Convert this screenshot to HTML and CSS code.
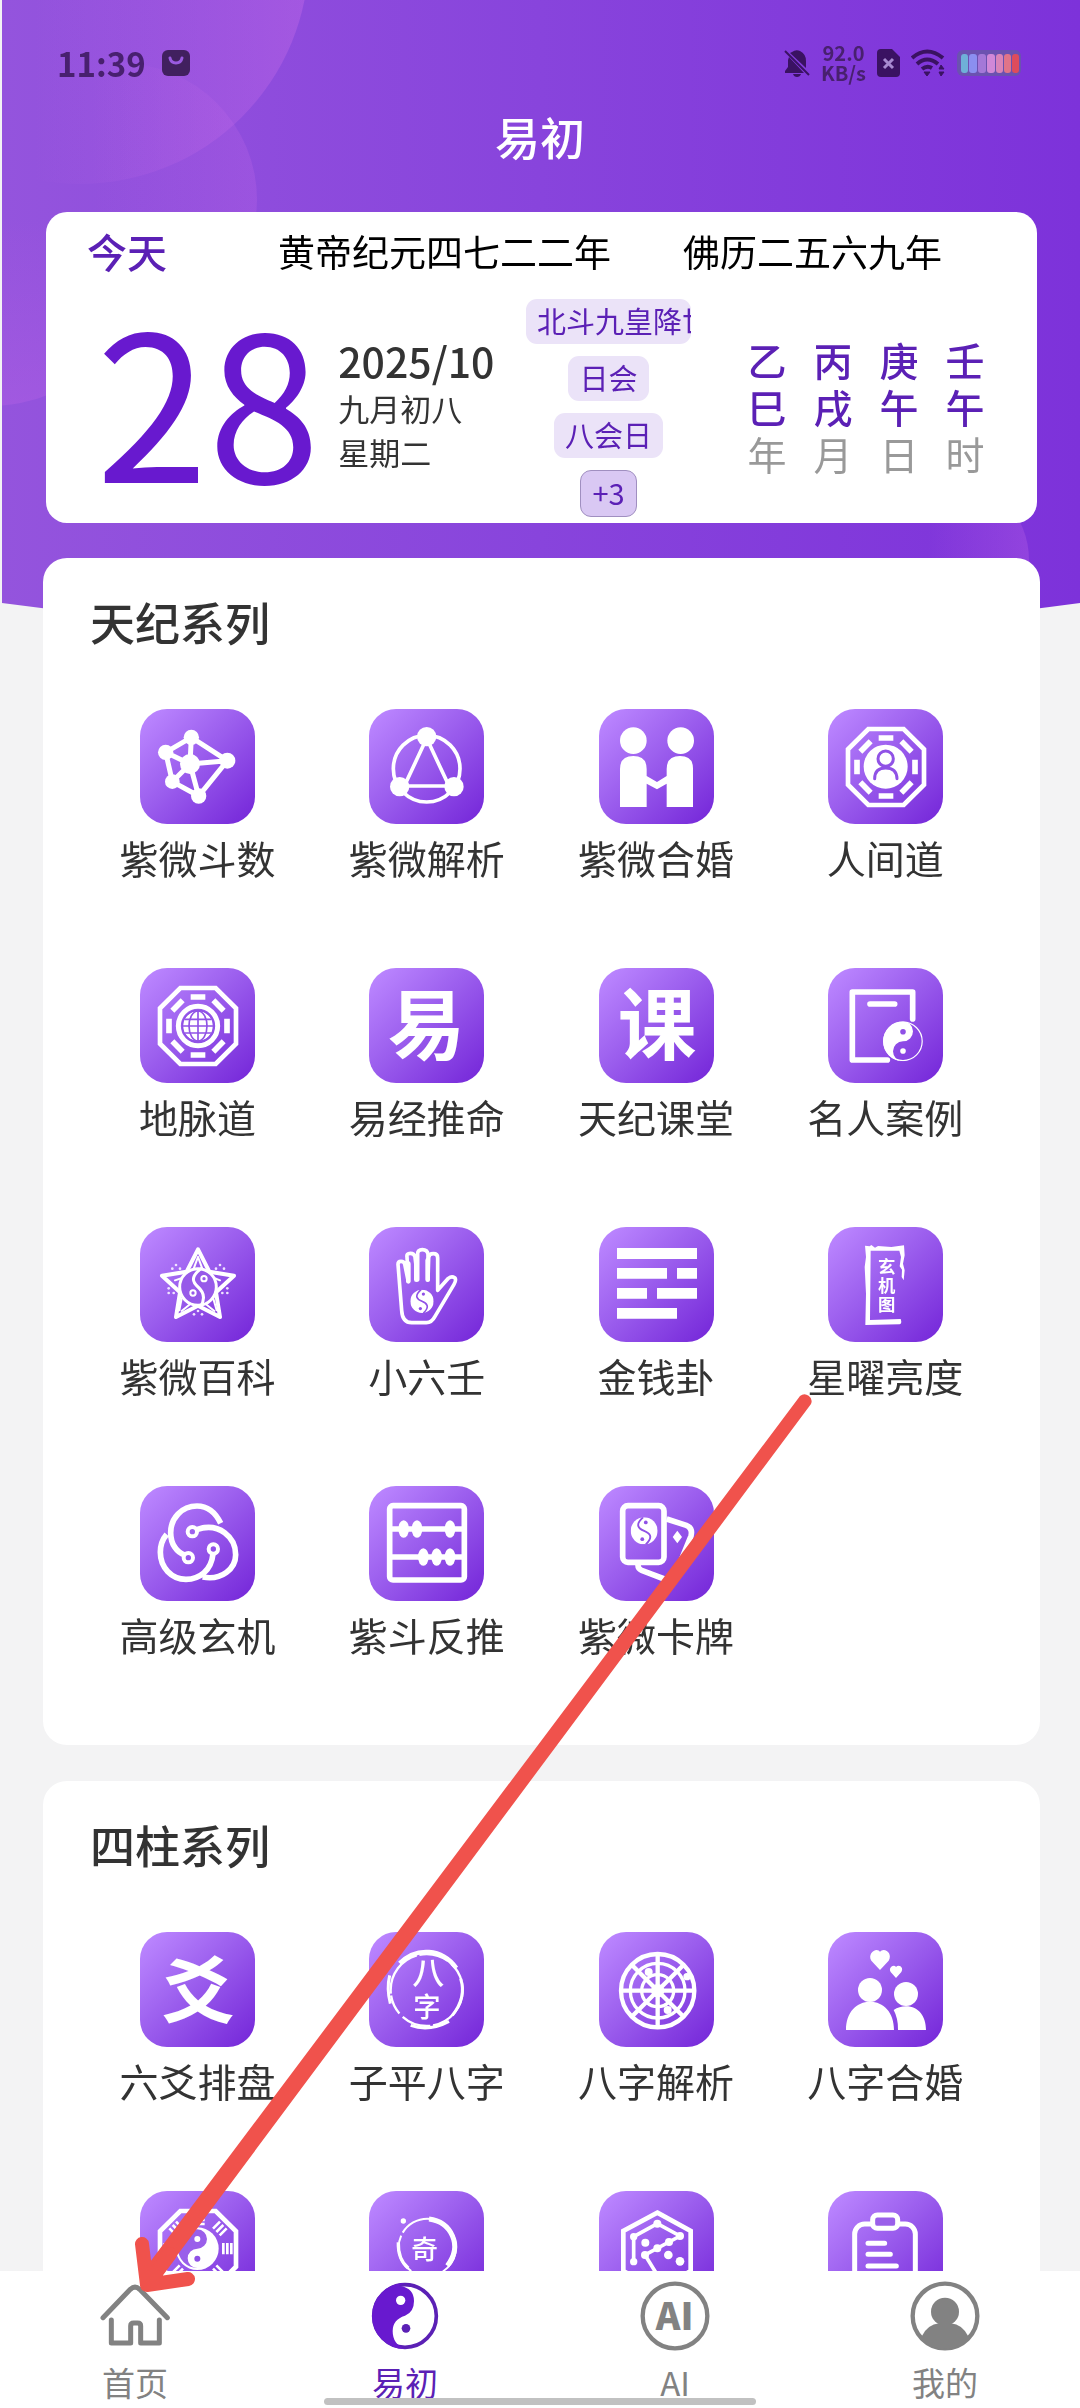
FILE: index.html
```html
<!DOCTYPE html>
<html lang="zh-CN">
<head>
<meta charset="utf-8">
<meta name="viewport" content="width=device-width, initial-scale=1">
<title>易初</title>
<link rel="stylesheet" href="styles.css">
</head>
<body>
<svg class="defs" aria-hidden="true">
  <defs>
    <symbol id="taiji" viewBox="-50 -50 100 100">
      <circle r="48" fill="none" stroke="currentColor" stroke-width="3"/>
      <path d="M0-50A50 50 0 0 0 0 50A25 25 0 0 1 0 0A25 25 0 0 0 0-50Z" fill="currentColor"/>
      <circle cy="-24" r="7" fill="#8f50e6"/>
      <circle cy="24" r="7" fill="currentColor"/>
    </symbol>
    <symbol id="taiji-full" viewBox="-50 -50 100 100">
      <circle r="50" fill="currentColor"/>
      <path d="M-4-50C-36-22-20-8 0 0S36 22 6 50" fill="none" stroke="#8f50e6" stroke-width="7"/>
      <circle cx="6" cy="-31" r="7" fill="#8f50e6"/>
      <circle cx="-7" cy="31" r="7" fill="#8f50e6"/>
    </symbol>
    <symbol id="octagon" viewBox="0 0 345 345">
      <path d="M121 60H227L288 121V227L227 288H121L60 227V121Z" fill="none" stroke="#fff" stroke-width="14"/>
      <g stroke="#fff" stroke-width="17">
        <path d="M152 87H196M152 261H196M87 152V196M261 152V196"/>
        <path d="M97 128L128 97M220 97L251 128M97 220L128 251M220 251L251 220"/>
      </g>
    </symbol>
  </defs>
</svg>

<div class="screen">
  <main class="content">
    <svg class="backdrop" viewBox="0 0 1080 640" preserveAspectRatio="none" aria-hidden="true">
      <defs>
        <linearGradient id="sky"><stop offset="0" stop-color="#9454dd"/><stop offset=".5" stop-color="#8844dc"/><stop offset="1" stop-color="#7d32da"/></linearGradient>
        <linearGradient id="glow"><stop offset=".4" stop-color="#c56be8" stop-opacity="0"/><stop offset="1" stop-color="#c56be8" stop-opacity=".4"/></linearGradient>
        <linearGradient id="glow-down" x2="0" y2="1"><stop offset=".4" stop-color="#b963e6" stop-opacity="0"/><stop offset="1" stop-color="#b963e6" stop-opacity=".35"/></linearGradient>
        <clipPath id="curve"><path d="M2 0H1080V603Q540 676 2 603Z"/></clipPath>
      </defs>
      <g clip-path="url(#curve)">
        <path d="M0 0H1080V640H0Z" fill="url(#sky)"/>
        <circle cx="120" cy="200" r="137" fill="url(#glow)" opacity=".6"/>
        <circle cx="80" cy="-45" r="229" fill="url(#glow)"/>
        <circle cx="-10" cy="250" r="156" fill="url(#glow-down)"/>
        <circle cx="945" cy="560" r="84" fill="url(#glow)" opacity=".7"/>
      </g>
    </svg>

    <header class="statusbar">
      <div class="status-group">
        <span class="clock">11:39</span>
        <svg width="28" height="26" viewBox="0 0 28 26"><rect width="28" height="26" rx="6" fill="#41205f"/><path d="M8 8Q9 13 14 13T20 8" fill="none" stroke="#9a5ae0" stroke-width="3" stroke-linecap="round"/></svg>
      </div>
      <div class="status-group status-right">
        <svg width="26" height="28" viewBox="0 0 26 28" fill="#3a1262"><path d="M5 8L20 24H1V22L4 18V11ZM8 3Q12 0 16 2Q22 5 22 12V19L6 4ZM9 25H17Q16 28 13 28T9 25Z"/><path d="M1 2L25 26" stroke="#3a1262" stroke-width="2"/></svg>
        <span class="speed">92.0<br>KB/s</span>
        <svg width="23" height="28" viewBox="0 0 23 28"><path d="M4 0H15L23 8V24Q23 28 19 28H4Q0 28 0 24V4Q0 0 4 0Z" fill="#3a1262"/><path d="M7 10L16 19M16 10L7 19" stroke="#a78ad0" stroke-width="3"/></svg>
        <svg width="34" height="28" viewBox="0 0 34 28" fill="none" stroke="#3a1262" stroke-width="4"><path d="M1 9Q16-4 32 9M6 15Q16 6 27 15M11 20Q16 16 21 19"/><path d="M13 23L16 27L19 23ZM28 20L30 16L33 20ZM28 23L30 27L33 23Z" fill="#3a1262" stroke-width="1"/></svg>
        <svg width="66" height="28" viewBox="0 0 66 28"><rect x="1" y="1" width="64" height="26" rx="6" fill="#6b52b0"/><g><rect x="5" y="5" width="7" height="19" rx="3" fill="#6fb0d8"/><rect x="13" y="5" width="8" height="19" rx="3" fill="#8b8ff0"/><rect x="22" y="5" width="8" height="19" rx="3" fill="#a478d8"/><rect x="31" y="5" width="8" height="19" rx="3" fill="#d088d8"/><rect x="40" y="5" width="7" height="19" rx="3" fill="#d884b8"/><rect x="48" y="5" width="7" height="19" rx="3" fill="#e07488"/><rect x="56" y="5" width="7" height="19" rx="3" fill="#de4c5c"/></g></svg>
      </div>
    </header>

    <h1 class="page-title">易初</h1>

    <section class="today">
      <div class="eras">
        <strong class="today-label">今天</strong>
        <span>黄帝纪元四七二二年</span>
        <span>佛历二五六九年</span>
      </div>
      <div class="today-body">
        <div class="day">28</div>
        <div class="date">
          <span class="month">2025/10</span>
          <span>九月初八</span>
          <span>星期二</span>
        </div>
        <div class="tags">
          <span class="tag">北斗九皇降世</span>
          <span class="tag">日会</span>
          <span class="tag">八会日</span>
          <button class="tag more" type="button">+3</button>
        </div>
        <table class="pillars">
          <tbody>
            <tr><td>乙</td><td>丙</td><td>庚</td><td>壬</td></tr>
            <tr><td>巳</td><td>戌</td><td>午</td><td>午</td></tr>
          </tbody>
          <tfoot>
            <tr><th scope="col">年</th><th scope="col">月</th><th scope="col">日</th><th scope="col">时</th></tr>
          </tfoot>
        </table>
      </div>
    </section>

    <section class="panel">
      <h2>天纪系列</h2>
      <div class="grid">
        <a class="item" href="#"><svg class="icon" viewBox="0 0 345 345"><g stroke="#fff" stroke-width="15" fill="none"><path d="M77 130L154 85L262 155L176 261L97 218ZM150 165L77 130M150 165L154 85M150 165L262 155M150 165L176 261M150 165L97 218"/></g><g fill="#fff"><circle cx="154" cy="85" r="23"/><circle cx="77" cy="130" r="23"/><circle cx="262" cy="155" r="24"/><circle cx="176" cy="261" r="23"/><circle cx="97" cy="218" r="22"/><circle cx="150" cy="165" r="30"/></g></svg><span>紫微斗数</span></a>
        <a class="item" href="#"><svg class="icon" viewBox="0 0 345 345"><g stroke="#fff" stroke-width="11" fill="none"><circle cx="173" cy="179" r="100"/><path d="M173 88L106 231H240Z"/></g><g fill="#fff"><circle cx="173" cy="83" r="29"/><circle cx="92" cy="233" r="29"/><circle cx="255" cy="233" r="29"/></g></svg><span>紫微解析</span></a>
        <a class="item" href="#"><svg class="icon" viewBox="0 0 345 345" fill="#fff"><circle cx="103" cy="95" r="40"/><circle cx="245" cy="95" r="40"/><path d="M63 294V180Q63 141 103 141T143 180V201L174 219L203 201V180Q203 141 243 141T282 180V294H203V224L174 241L143 224V294Z"/></svg><span>紫微合婚</span></a>
        <a class="item" href="#"><svg class="icon" viewBox="0 0 345 345"><use href="#octagon"/><circle cx="173" cy="173" r="66" fill="#fff"/><g stroke="#9052e6" stroke-width="9" fill="none" stroke-linecap="round"><circle cx="173" cy="149" r="23"/><path d="M140 209Q140 177 173 177T207 209"/></g></svg><span>人间道</span></a>

        <a class="item" href="#"><svg class="icon" viewBox="0 0 345 345"><use href="#octagon"/><circle cx="174" cy="174" r="59" fill="none" stroke="#fff" stroke-width="15"/><circle cx="174" cy="174" r="45" fill="#fff"/><g stroke="#9052e6" stroke-width="5" fill="none"><circle cx="174" cy="174" r="47"/><ellipse cx="174" cy="174" rx="27" ry="45"/><path d="M174 129V219M129 174H219M134 154H214M134 195H214"/></g></svg><span>地脉道</span></a>
        <a class="item" href="#"><svg class="icon glyph" viewBox="0 0 345 345"><text x="172" y="257" font-size="232">易</text></svg><span>易经推命</span></a>
        <a class="item" href="#"><svg class="icon glyph" viewBox="0 0 345 345"><text x="174" y="259" font-size="236">课</text></svg><span>天纪课堂</span></a>
        <a class="item" href="#"><svg class="icon" viewBox="0 0 345 345" color="#fff"><g stroke="#fff" stroke-width="17" fill="none" stroke-linecap="round" stroke-linejoin="round"><path d="M254 153V72H73V276H178M126 108H200"/></g><use href="#taiji" x="165" y="160" width="120" height="120"/></svg><span>名人案例</span></a>

        <a class="item" href="#"><svg class="icon" viewBox="0 0 345 345"><g stroke="#fff" fill="none" stroke-linejoin="round" stroke-linecap="round"><path d="M174 67L208 134L282 146L228 196L240 270L174 236L108 270L120 196L66 146L140 134Z" stroke-width="12"/><path d="M174 90L160 128M174 90L188 128M240 160L215 150M105 160L135 150M118 250L125 215M125 252L150 232M230 250L220 215M223 252L198 232" stroke-width="6"/><circle cx="174" cy="180" r="55" fill="#975ae9" stroke-width="9"/><path d="M184 124C150 150 158 166 174 180S198 212 182 238" stroke-width="9"/><circle cx="192" cy="155" r="8" stroke-width="6"/><circle cx="159" cy="198" r="8" stroke-width="6"/></g><g fill="#f0e4ff"><circle cx="97" cy="125" r="4"/><circle cx="108" cy="114" r="4"/><circle cx="120" cy="125" r="4"/><circle cx="228" cy="125" r="4"/><circle cx="240" cy="114" r="4"/><circle cx="252" cy="125" r="4"/><circle cx="86" cy="184" r="4"/><circle cx="86" cy="198" r="4"/><circle cx="101" cy="198" r="4"/><circle cx="262" cy="184" r="4"/><circle cx="262" cy="198" r="4"/><circle cx="247" cy="198" r="4"/><circle cx="162" cy="262" r="4"/><circle cx="174" cy="252" r="4"/><circle cx="186" cy="262" r="4"/></g></svg><span>紫微百科</span></a>
        <a class="item" href="#"><svg class="icon" viewBox="0 0 345 345" color="#fff"><path d="M118 165L107 111Q105 103 96 103T87 112L98 250Q100 287 128 287H172Q188 287 198 268L255 172Q263 158 257 152Q248 146 238 154L206 190V92Q206 80 193 80T179 92L177 158V82Q175 68 160 68T146 82V158L138 90Q136 79 124 79T114 90L118 165" fill="none" stroke="#fff" stroke-width="11" stroke-linejoin="round"/><path d="M118 110V163M142 100V158M176 100V158" stroke="#fff" stroke-width="14" stroke-linecap="round"/><use href="#taiji-full" x="124" y="188" width="70" height="70"/></svg><span>小六壬</span></a>
        <a class="item" href="#"><svg class="icon" viewBox="0 0 345 345" fill="#fff"><path d="M54 63H294V96H54ZM54 123H204V155H54ZM234 123H294V155H234ZM54 183H144V215H54ZM174 183H294V215H174ZM54 243H234V275H54Z"/></svg><span>金钱卦</span></a>
        <a class="item" href="#"><svg class="icon glyph" viewBox="0 0 345 345"><path d="M111 56L125 58L130 54L141 62L150 57L190 60L228 55L230 85L225 110L230 130L227 160L221 150L222 128L215 118L219 90L214 71H128L126 279L218 276Q223 290 215 292L112 294L114 200L110 120L114 90Z" fill="#fff"/><text x="176" y="138" font-size="52">玄</text><text x="176" y="195" font-size="52">机</text><text x="176" y="252" font-size="52">图</text></svg><span>星曜亮度</span></a>

        <a class="item" href="#"><svg class="icon" viewBox="0 0 345 345"><g stroke="#fff" fill="none" stroke-width="17"><path d="M242 112C222 70 196 60 171 60C125 60 92 97 92 140C92 176 112 200 134 207M170 131C238 107 287 155 287 206C287 248 245 284 188 273M219 203C214 254 178 280 138 280C94 280 61 244 61 199C61 178 68 159 80 145"/><circle cx="157" cy="137" r="14" stroke-width="12"/><circle cx="145" cy="215" r="14" stroke-width="12"/><circle cx="220" cy="189" r="14" stroke-width="12"/></g></svg><span>高级玄机</span></a>
        <a class="item" href="#"><svg class="icon" viewBox="0 0 345 345"><g stroke="#fff" fill="none" stroke-width="17"><rect x="62" y="59" width="224" height="223" rx="10"/><path d="M62 129H286M62 213H286"/></g><g fill="#fff"><ellipse cx="104" cy="129" rx="16" ry="26"/><ellipse cx="144" cy="129" rx="16" ry="26"/><ellipse cx="243" cy="129" rx="16" ry="26"/><ellipse cx="163" cy="213" rx="16" ry="26"/><ellipse cx="203" cy="213" rx="16" ry="26"/><ellipse cx="243" cy="213" rx="16" ry="26"/></g></svg><span>紫斗反推</span></a>
        <a class="item" href="#"><svg class="icon" viewBox="0 0 345 345" color="#fff"><g stroke="#fff" fill="none" stroke-width="17"><rect x="71" y="59" width="124" height="170" rx="16"/><path d="M203 99L262 118Q282 126 276 150L228 268Q218 288 196 279L128 253Q116 248 117 235"/></g><path d="M235 134L249 153L235 172L221 153Z" fill="#fff"/><use href="#taiji-full" x="95" y="94" width="81" height="81"/></svg><span>紫微卡牌</span></a>
      </div>
    </section>

    <section class="panel">
      <h2>四柱系列</h2>
      <div class="grid">
        <a class="item" href="#"><svg class="icon glyph" viewBox="0 0 345 345"><text x="174" y="258" font-size="220">爻</text></svg><span>六爻排盘</span></a>
        <a class="item" href="#"><svg class="icon glyph" viewBox="0 0 345 345"><g fill="none" stroke="#fff"><circle cx="173" cy="174" r="108" stroke-width="7" stroke-dasharray="150 8 90 14 60 6"/><path d="M92 94Q130 56 180 60T262 108" stroke-width="13"/><path d="M275 140Q293 195 250 250M125 280Q180 300 240 268M62 130Q52 170 64 215" stroke-width="9"/></g><text class="thin" x="178" y="155" font-size="96">八</text><text class="thin" x="174" y="256" font-size="82">字</text></svg><span>子平八字</span></a>
        <a class="item" href="#"><svg class="icon" viewBox="0 0 345 345"><g fill="none" stroke="#fff" stroke-width="13"><circle cx="176" cy="176" r="110"/><circle cx="176" cy="176" r="82" stroke-width="10"/><circle cx="176" cy="176" r="48" stroke-width="10"/><path d="M176 66V286M66 176H286M98 98L254 254M254 98L98 254"/></g><g fill="#fff"><circle cx="176" cy="176" r="20"/><circle cx="149" cy="120" r="12"/><circle cx="264" cy="134" r="11"/><circle cx="206" cy="234" r="12"/></g></svg><span>八字解析</span></a>
        <a class="item" href="#"><svg class="icon" viewBox="0 0 345 345" fill="#fff"><circle cx="126" cy="174" r="36"/><circle cx="234" cy="186" r="36"/><path d="M54 294C54 240 86 209 126 209S198 240 198 294ZM197 234Q214 223 234 223C272 223 294 254 294 294H210Q211 260 197 234ZM156 114L130 86C120 70 134 54 146 54Q153 54 156 59Q160 54 167 54C180 54 192 70 182 86ZM204 138L188 120C182 110 190 101 197 101Q202 101 204 105Q207 101 212 101C220 101 226 110 220 120Z"/></svg><span>八字合婚</span></a>

        <a class="item" href="#"><svg class="icon" viewBox="0 0 345 345"><path d="M121 60H227L288 121V227L227 288H121L60 227V121Z" fill="none" stroke="#fff" stroke-width="14"/><g stroke="#fff" stroke-width="8"><path d="M154 75H194M154 87H194M154 99H194M250 156V190M262 156V190M274 156V190M74 156V190M86 156V190M98 156V190"/><path d="M219 113L240 92M229 123L250 102M239 133L260 112M129 113L108 92M119 123L98 102M109 133L88 112M219 233L240 254M229 223L250 244M129 233L108 254M119 223L98 244"/></g><circle cx="172" cy="173" r="64" fill="#fff"/><path d="M172 115A58 58 0 0 0 172 231A29 29 0 0 1 172 173A29 29 0 0 0 172 115Z" fill="#9a5fea"/><circle cx="172" cy="144" r="9" fill="#fff"/><circle cx="172" cy="203" r="9" fill="#8f50e6"/></svg></a>
        <a class="item" href="#"><svg class="icon glyph" viewBox="0 0 345 345"><g fill="none" stroke="#fff"><circle cx="175" cy="169" r="86" stroke-width="6" stroke-dasharray="180 6 120 10"/><path d="M180 84Q230 90 250 134T235 224" stroke-width="15"/><path d="M88 154Q86 204 118 232" stroke-width="10"/></g><circle cx="103" cy="90" r="8" fill="#fff"/><text class="thin" x="167" y="204" font-size="80">奇</text></svg></a>
        <a class="item" href="#"><svg class="icon" viewBox="0 0 345 345"><g fill="none" stroke="#fff" stroke-width="14"><path d="M175 65L275 120V240L175 298L73 240V120Z"/><path d="M104 212V137L175 98L243 135L138 192L180 260" stroke-width="11"/></g><g fill="#fff"><circle cx="104" cy="212" r="11"/><circle cx="104" cy="137" r="11"/><circle cx="175" cy="98" r="12"/><circle cx="243" cy="135" r="12"/><circle cx="210" cy="153" r="12"/><circle cx="175" cy="172" r="12"/><circle cx="138" cy="192" r="12"/><circle cx="139" cy="155" r="12"/><circle cx="208" cy="192" r="13"/><circle cx="243" cy="211" r="13"/></g></svg></a>
        <a class="item" href="#"><svg class="icon" viewBox="0 0 345 345"><g fill="none" stroke="#fff" stroke-width="15" stroke-linecap="round"><rect x="80" y="99" width="182" height="210" rx="30"/><rect x="134" y="72" width="75" height="40" rx="14" fill="#9a5fea"/><path d="M120 157H170M120 190H187M120 225H205"/></g></svg></a>
      </div>
    </section>
  </main>

  <nav class="tabbar">
    <a href="#"><svg viewBox="0 0 210 210" fill="none" stroke="#828282" stroke-width="15" stroke-linecap="round" stroke-linejoin="round"><path d="M9 110L91 25Q105 12 119 25L202 110M34 117V186H92V135Q92 126 101 126H113Q122 126 122 135V186H178V117"/></svg><span>首页</span></a>
    <a href="#" class="active" aria-current="page"><svg viewBox="0 0 210 210"><circle cx="105" cy="105" r="94" fill="#fff" stroke="#5b20b5" stroke-width="11"/><path d="M105 6A99 99 0 0 0 105 204Q68 190 68 150Q68 116 105 104Q132 94 132 60Q132 20 86 14Z" fill="#6819cf"/><circle cx="92" cy="58" r="14" fill="#fff"/><circle cx="108" cy="142" r="13" fill="#5b20b5"/></svg><span>易初</span></a>
    <a href="#"><svg viewBox="0 0 210 210"><circle cx="105" cy="105" r="97" fill="none" stroke="#828282" stroke-width="13"/><text class="ai-mark" x="104" y="147" font-size="112">AI</text></svg><span>AI</span></a>
    <a href="#"><svg viewBox="0 0 210 210" fill="#828282"><circle cx="105" cy="105" r="97" fill="none" stroke="#828282" stroke-width="13"/><circle cx="105" cy="92" r="42"/><path d="M34 168Q52 130 88 127H122Q158 130 176 168Q148 204 105 204T34 168Z"/></svg><span>我的</span></a>
  </nav>
  <div class="gesture-pill"></div>

  <svg class="arrow" viewBox="0 0 1080 2408" preserveAspectRatio="none" aria-hidden="true">
    <path d="M800 1396A7 7 0 0 1 811 1404L161 2277L147 2266Z" fill="#f0524c"/>
    <path d="M142 2244L147 2285L188 2279M147 2285L170 2254" fill="none" stroke="#f0524c" stroke-width="14" stroke-linecap="round" stroke-linejoin="round"/>
  </svg>
</div>
</body>
</html>
```
FILE: styles.css
```css
* {
  box-sizing: border-box;
}

body {
  margin: 0;
  background: #f3f3f4;
  color: #333;
  font-family: "Noto Sans CJK SC", sans-serif;
}

a {
  color: inherit;
  text-decoration: none;
}

.defs {
  position: absolute;
  width: 0;
  height: 0;
}

.screen {
  position: relative;
  display: flex;
  flex-direction: column;
  height: 100vh;
}

.content {
  position: relative;
  flex: 1;
  min-height: 0;
  overflow: hidden auto;
  scrollbar-width: none;
}

.backdrop {
  position: absolute;
  top: 0;
  left: 0;
  z-index: -1;
  width: 100%;
  height: 640px;
}

.statusbar {
  display: flex;
  justify-content: space-between;
  align-items: center;
  height: 94px;
  padding: 32px 58px 0 57px;
}

.status-group {
  display: flex;
  align-items: center;
  gap: 16px;
}

.status-right {
  gap: 11px;
}

.clock {
  color: #48206f;
  font-size: 33px;
  font-weight: 700;
  line-height: 40px;
}

.speed {
  color: #48206f;
  font-size: 20px;
  font-weight: 700;
  line-height: 20px;
  text-align: center;
}

.page-title {
  margin: 0;
  color: #fff;
  font-size: 45px;
  font-weight: 500;
  line-height: 86px;
  text-align: center;
}

.today {
  margin: 32px 43px 35px 46px;
  padding: 14px 39px 6px 41px;
  border-radius: 21px;
  background: #fff;
}

.eras {
  display: flex;
  color: #000;
  font-size: 37px;
  line-height: 50px;
  gap: 72px;
}

.today-label {
  width: 119px;
  color: #5b20b5;
  font-size: 40px;
  font-weight: 500;
}

.today-body {
  display: flex;
  align-items: center;
  padding-top: 23px;
}

.day {
  padding: 0 18px 26px 9px;
  color: #6819cf;
  font-size: 202px;
  line-height: 190px;
}

.date {
  display: flex;
  flex: 1;
  flex-direction: column;
  padding-bottom: 8px;
  font-size: 31px;
  line-height: 44px;
}

.month {
  font-size: 41px;
  font-weight: 500;
  line-height: 52px;
}

.tags {
  display: flex;
  flex-direction: column;
  align-items: center;
  width: 165px;
  gap: 12px;
}

.tag {
  max-width: 100%;
  overflow: hidden;
  padding: 0 11px 2px;
  border-radius: 11px;
  background: #ebe3f8;
  color: #5b20b5;
  font-family: inherit;
  font-size: 29px;
  line-height: 43px;
  white-space: nowrap;
}

.more {
  border: 1px solid #a08fc0;
  background: #d9c8f3;
}

.pillars {
  width: 264px;
  margin: 0 0 4px 43px;
  border-collapse: collapse;
  table-layout: fixed;
  color: #5b20b5;
  font-size: 39px;
  font-weight: 500;
  line-height: 47px;
  text-align: center;
}

.pillars td,
.pillars th {
  padding: 0;
}

.pillars th {
  color: #999;
  font-weight: 400;
}

.panel {
  margin: 0 40px 36px 43px;
  padding: 34px 40px 86px;
  border-radius: 24px;
  background: #fff;
}

.panel h2 {
  margin: 0 7px 57px;
  font-size: 45px;
  font-weight: 500;
  line-height: 60px;
}

.grid {
  display: grid;
  grid-template-columns: repeat(4, 1fr);
  row-gap: 86px;
}

.item {
  display: flex;
  flex-direction: column;
  align-items: center;
  padding-bottom: 2px;
  gap: 10px;
  font-size: 39px;
  line-height: 46px;
}

.icon {
  width: 115px;
  height: 115px;
  border-radius: 27px;
  background: linear-gradient(135deg, #bb86ff 5%, #9c5fee 45%, #772ada 95%);
}

.glyph text {
  fill: #fff;
  font-weight: 700;
  text-anchor: middle;
}

.glyph .thin {
  font-weight: 500;
}

.tabbar {
  display: grid;
  grid-template-columns: repeat(4, 1fr);
  height: 137px;
  padding-top: 10px;
  background: #fff;
  color: #828282;
  font-size: 33px;
  line-height: 46px;
}

.tabbar a {
  display: flex;
  flex-direction: column;
  align-items: center;
  gap: 8px;
}

.tabbar svg {
  width: 70px;
  height: 70px;
}

.tabbar .active {
  color: #5b20b5;
}

.ai-mark {
  fill: #828282;
  font-weight: 900;
  text-anchor: middle;
}

.gesture-pill {
  position: absolute;
  bottom: 3px;
  left: 30%;
  width: 40%;
  height: 7px;
  border-radius: 4px;
  background: #c1c1c1;
}

.arrow {
  position: absolute;
  inset: 0;
  width: 100%;
  height: 100%;
  pointer-events: none;
}
```
